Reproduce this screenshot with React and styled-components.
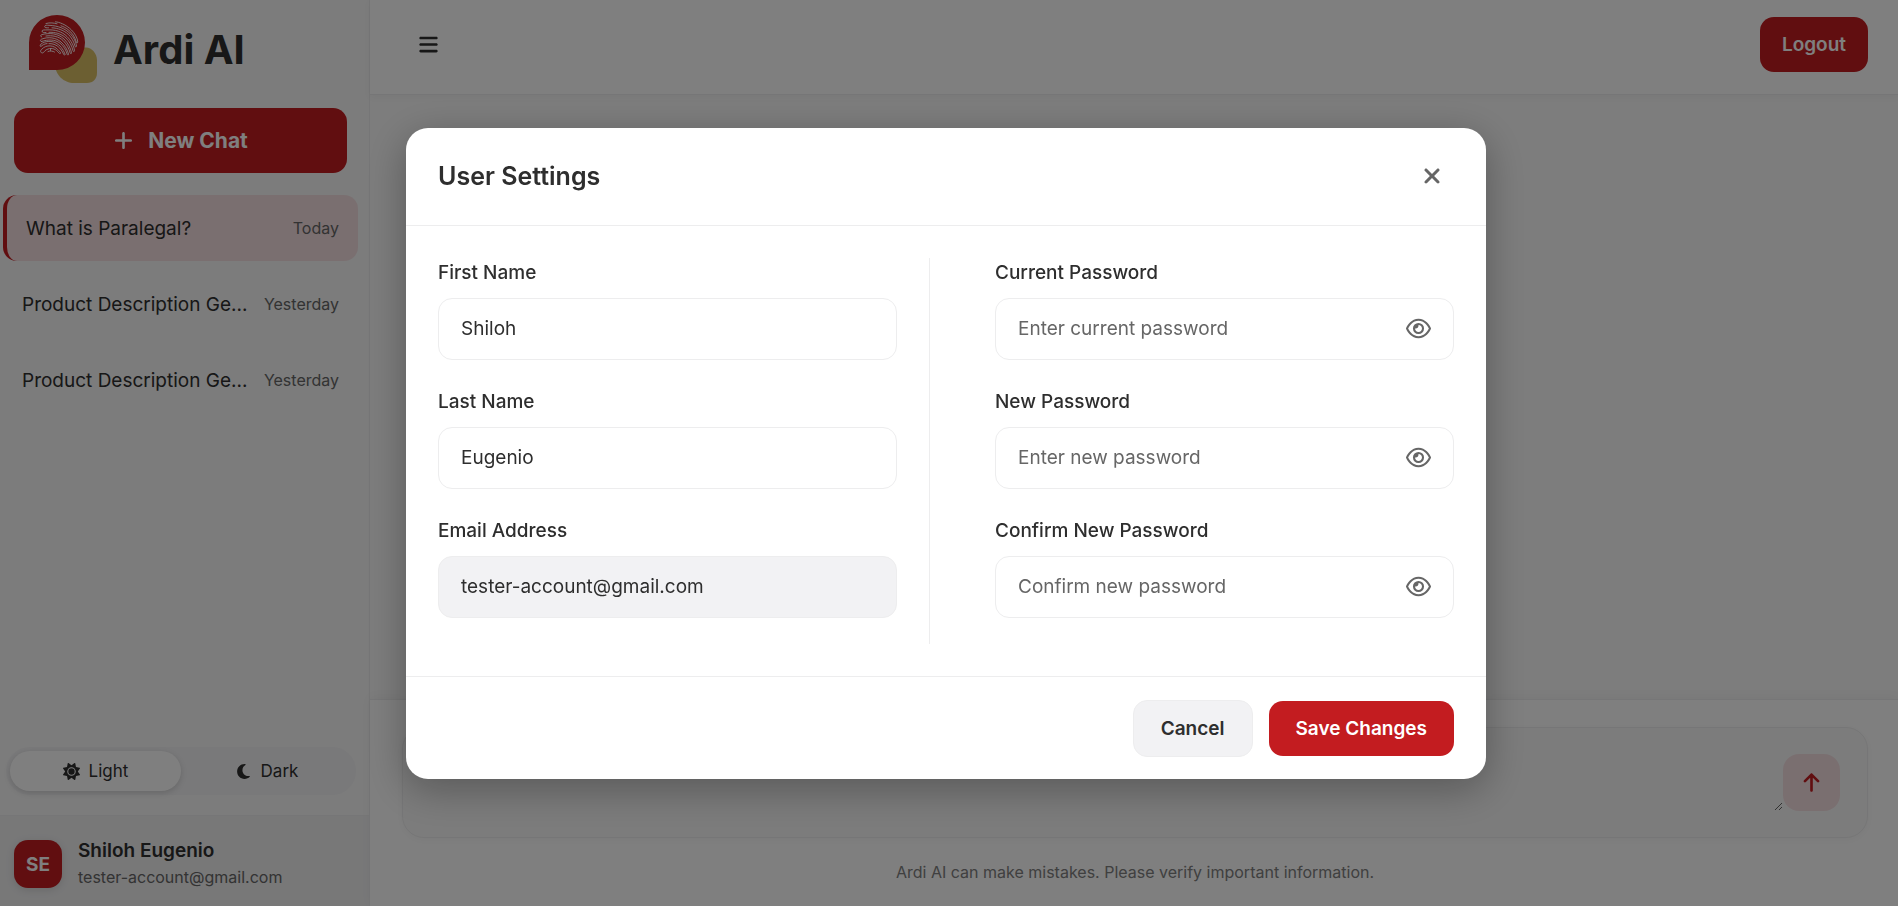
import React, { useState } from "react";
import styled, { createGlobalStyle } from "styled-components";
import { FaArrowUp, FaBars, FaMoon, FaPlus, FaRegEye, FaSun, FaXmark } from "react-icons/fa6";

const c = {
  red: "#c31c20",
  gold: "#d9bf65",
  ink: "#2e2e2e",
  muted: "#666666",
  line: "#ededee",
  soft: "#f2f2f4",
  tint: "#f4dfe1",
};

const GlobalStyle = createGlobalStyle`
  *, *::before, *::after { box-sizing: border-box; }
  body { margin: 0; color: ${c.ink}; background: #fafafa; font-family: Inter, "Liberation Sans", sans-serif; }
  button, input, textarea { font: inherit; color: inherit; }
  button { cursor: pointer; border: 0; padding: 0; background: none; }
`;

const Page = styled.div`
  display: flex;
  min-height: 100vh;
`;

const Sidebar = styled.aside`
  display: flex;
  flex-direction: column;
  flex: none;
  width: 370px;
  background: #f8f8f8;
  border-right: 1px solid ${c.line};
`;

const Brand = styled.div`
  display: flex;
  align-items: center;
  gap: 15px;
  height: 98px;
  padding-left: 28px;
  font-size: 40px;
  font-weight: 700;
`;

const NewChat = styled.button`
  display: flex;
  align-items: center;
  justify-content: center;
  gap: 14px;
  height: 65px;
  margin: 10px 22px 22px 14px;
  border-radius: 14px;
  background: ${c.red};
  color: #fff;
  font-size: 21px;
  font-weight: 700;

  svg { width: auto; }
`;

const ChatList = styled.nav`
  display: flex;
  flex-direction: column;
  flex: 1;
  gap: 10px;
  padding: 0 11px 0 3px;
`;

const ChatLink = styled.a`
  display: flex;
  align-items: center;
  justify-content: space-between;
  height: 66px;
  padding: 0 19px;
  border-radius: 14px;
  border-left: ${(p) => (p.$active ? `4px solid ${c.red}` : "0")};
  background: ${(p) => (p.$active ? c.tint : "transparent")};
  color: inherit;
  text-decoration: none;
  white-space: nowrap;
`;

const ChatTitle = styled.span`
  font-size: 19px;
`;

const ChatDate = styled.span`
  color: ${c.muted};
  font-size: 16px;
`;

const ThemeSwitch = styled.div`
  display: flex;
  margin: 0 13px 20px 6px;
  padding: 4px;
  border-radius: 24px;
  background: ${c.soft};
`;

const ThemeButton = styled.button`
  display: flex;
  align-items: center;
  justify-content: center;
  flex: 1;
  gap: 9px;
  height: 40px;
  border-radius: 20px;
  font-size: 17px;
  background: ${(p) => (p.$active ? "#fff" : "transparent")};
  box-shadow: ${(p) => (p.$active ? "0 2px 6px rgba(0, 0, 0, 0.15)" : "none")};

  svg { width: auto; }
`;

const Account = styled.div`
  display: flex;
  align-items: center;
  gap: 16px;
  height: 91px;
  padding: 6px 14px 0;
  border-top: 1px solid ${c.line};
  background: #f0f0f1;
`;

const Avatar = styled.div`
  display: grid;
  place-items: center;
  width: 48px;
  height: 48px;
  border-radius: 14px;
  background: ${c.red};
  color: #fff;
  font-size: 19px;
  font-weight: 700;
  box-shadow: 0 2px 8px rgba(0, 0, 0, 0.12);
`;

const AccountText = styled.div`
  display: flex;
  flex-direction: column;
  gap: 2px;
  font-size: 16px;
  line-height: 25px;
  color: ${c.muted};

  strong { color: ${c.ink}; font-size: 19px; font-weight: 600; }
`;

const Main = styled.main`
  display: flex;
  flex-direction: column;
  flex: 1;
  min-width: 0;
`;

const TopBar = styled.header`
  display: flex;
  justify-content: space-between;
  align-items: center;
  height: 95px;
  padding: 0 30px 6px 48px;
  background: #fff;
  border-bottom: 1px solid ${c.line};
  box-shadow: 0 2px 8px rgba(0, 0, 0, 0.04);
`;

const MenuButton = styled.button`
  display: flex;
  font-size: 21px;
`;

const Button = styled.button`
  height: ${(p) => (p.$quiet ? 57 : 55)}px;
  padding: 0 ${(p) => p.$pad}px;
  border-radius: 14px;
  border: ${(p) => (p.$quiet ? `1px solid ${c.line}` : "0")};
  background: ${(p) => (p.$quiet ? c.soft : c.red)};
  color: ${(p) => (p.$quiet ? c.ink : "#fff")};
  font-size: 19px;
  font-weight: 600;
`;

const Conversation = styled.section`
  flex: 1;
`;

const ComposerPanel = styled.footer`
  padding: 27px 30px 21px 32px;
  border-top: 1px solid ${c.line};
  background: #fff;
  box-shadow: 0 -2px 10px rgba(0, 0, 0, 0.04);
`;

const Composer = styled.form`
  display: flex;
  align-items: center;
  height: 111px;
  padding: 0 27px 0 22px;
  border: 1px solid ${c.line};
  border-radius: 22px;
  background: #f9f9f9;
  box-shadow: 0 2px 10px rgba(0, 0, 0, 0.04);
`;

const Message = styled.textarea`
  flex: 1;
  height: 57px;
  border: 0;
  outline: 0;
  background: transparent;
  font-size: 19px;
  resize: vertical;
`;

const Send = styled.button`
  display: grid;
  place-items: center;
  width: 57px;
  height: 57px;
  border-radius: 16px;
  background: ${c.tint};
  color: ${c.red};
  font-size: 21px;
`;

const Disclaimer = styled.p`
  margin: 22px 0 0;
  text-align: center;
  color: #808080;
  font-size: 16px;
  line-height: 25px;
`;

const Overlay = styled.div`
  position: fixed;
  inset: 0;
  display: flex;
  align-items: center;
  justify-content: center;
  padding-right: 6px;
  background: rgba(0, 0, 0, 0.5);
`;

const Dialog = styled.form`
  width: 1080px;
  max-width: 94%;
  border-radius: 22px;
  background: #fff;
  box-shadow: 0 10px 40px rgba(0, 0, 0, 0.3);
`;

const DialogHeader = styled.header`
  display: flex;
  align-items: center;
  justify-content: space-between;
  height: 98px;
  padding: 0 42px 0 32px;
  border-bottom: 1px solid ${c.line};

  h2 { margin: 0; font-size: 25px; font-weight: 600; }
`;

const CloseButton = styled.button`
  display: flex;
  color: ${c.muted};
  font-size: 24px;
`;

const DialogBody = styled.div`
  display: grid;
  grid-template-columns: 1fr 1fr;
  gap: 32px;
  padding: 32px;
`;

const Column = styled.div`
  display: flex;
  flex-direction: column;
  gap: 27px;
  padding-bottom: 26px;

  &:first-child { padding-right: 32px; border-right: 1px solid ${c.line}; }
  &:last-child { padding-left: 33px; }
`;

const FieldBox = styled.div`
  display: flex;
  flex-direction: column;
  gap: 10px;
  font-size: 19px;

  label { line-height: 30px; font-weight: 500; }
`;

const InputFrame = styled.div`
  display: flex;
  align-items: center;
  height: 62px;
  padding: 0 22px;
  border: 1px solid ${c.line};
  border-radius: 14px;
  background: ${(p) => (p.$disabled ? c.soft : "#fff")};

  input { flex: 1; min-width: 0; padding: 0; border: 0; outline: 0; background: transparent; }
  input::placeholder { color: ${c.muted}; opacity: 1; }
  button { display: flex; color: ${c.muted}; font-size: 25px; }
`;

const DialogFooter = styled.footer`
  display: flex;
  align-items: center;
  justify-content: flex-end;
  gap: 16px;
  padding: 23px 32px 22px;
  border-top: 1px solid ${c.line};
`;

/* Fingerprint ridges: hairpin loops fanning from the lower left to the lower right. */
const ridges = [
  "M14.500 39C12 39 12 36.500 14 35C18 31 24 31 28 34C30 35.500 32 38 32.500 38.500C33 39.500 32 40 31.300 39.300C28 35 24 33.500 20 35C17 36 16.500 37.500 15.500 38.500",
  "M20 37.500C22 36.500 25 37 26.500 38M22.500 34.500V36.500",
  "M19 29.500C16 29.800 14 31.500 13 32.500C11.800 32.500 12 31 13 30C17 27 23 26.500 28 29C32 31 35 35 37 40C37.500 41.300 36.300 41.500 35.800 40.500C33.500 35.500 30.500 31.800 26 30.300C24 29.700 22 29.500 21 29.600",
  "M13.500 27.500C12 27.500 12 25.800 13.500 25.200C20 22.500 28 23.500 33 28C37 31.500 39.500 36 40.500 40C40.800 41.300 39.500 41.300 39.200 40.300C38 36 35.500 32 32 29.200C27 25.200 20 25.300 13.500 27.500",
  "M13.500 22.800C12 22.500 12.500 21 13.800 20.600C22 18.500 30 19.500 36 25C40 29 42.500 34 43.500 38.500C43.700 40 42.500 40 42.200 39C41 34.500 38.500 30 35 26.500C31 22.500 24 21 18 22",
  "M18 18.500C16.500 18.800 14 18.800 14 17C14.200 15.600 17 16 19 15.900C27 15.400 34 17.500 39 22.500C43 26.500 46 32 46.500 36.500C46.500 38 45.300 37.800 45 36.800C44 32 41.500 27.500 38 24C33 19.500 27 18 21 18.300",
  "M20.500 13.800C18.500 13.800 16.500 14 16.700 12.400C17 11 19 11.200 21 11.300C30 11.700 37 14.500 42 19.500C46 23.500 48 28 48.500 32C48.300 33.500 47.200 33 47 32C46 28 43.500 23.500 40.500 20.500C36 16.500 30 14 24 13.800",
  "M18 9.500C22 8.300 26 9 29 9.800M27.500 7.800C31 8 38 10.500 43.500 16C47 19.500 49.500 24 49.800 28C49.500 29.500 48.500 29 48.300 28C47 23 44 18.500 40 15.500C37.500 13.500 35 12.500 33 11.800",
];

function Logo() {
  return (
    <svg width="70" height="70" viewBox="0 0 70 70" aria-hidden="true">
      <path d="M27 40H50C56 27 69 36 69 46V59C69 65 65 69 59 69H46C36 69 27 61 27 50Z" fill={c.gold} />
      <path d="M1 56V28.500A28 27.500 0 1 1 29 56Z" fill={c.red} />
      <g fill="none" stroke="#fff" strokeWidth="0.9" strokeLinecap="round" strokeLinejoin="round">
        {ridges.map((d) => <path key={d} d={d} />)}
      </g>
    </svg>
  );
}

function Field({ id, label, ...rest }) {
  const isPassword = rest.type === "password";
  const [shown, setShown] = useState(false);
  return (
    <FieldBox>
      <label htmlFor={id}>{label}</label>
      <InputFrame $disabled={rest.readOnly}>
        <input id={id} {...rest} type={isPassword && shown ? "text" : rest.type} />
        {isPassword && (
          <button type="button" aria-label={`Show ${label}`} onClick={() => setShown(!shown)}>
            <FaRegEye />
          </button>
        )}
      </InputFrame>
    </FieldBox>
  );
}

const chats = [
  { title: "What is Paralegal?", date: "Today", active: true },
  { title: "Product Description Ge...", date: "Yesterday" },
  { title: "Product Description Ge...", date: "Yesterday" },
];

export default function App() {
  const [theme, setTheme] = useState("light");
  return (
    <>
      <GlobalStyle />
      <Page>
        <Sidebar>
          <Brand><Logo />Ardi AI</Brand>
          <NewChat><FaPlus />New Chat</NewChat>
          <ChatList>
            {chats.map((chat, i) => (
              <ChatLink key={i} href="#" $active={chat.active}>
                <ChatTitle>{chat.title}</ChatTitle>
                <ChatDate>{chat.date}</ChatDate>
              </ChatLink>
            ))}
          </ChatList>
          <ThemeSwitch>
            <ThemeButton $active={theme === "light"} onClick={() => setTheme("light")}><FaSun size={17} />Light</ThemeButton>
            <ThemeButton $active={theme === "dark"} onClick={() => setTheme("dark")}><FaMoon size={17} />Dark</ThemeButton>
          </ThemeSwitch>
          <Account>
            <Avatar>SE</Avatar>
            <AccountText><strong>Shiloh Eugenio</strong>tester-account@gmail.com</AccountText>
          </Account>
        </Sidebar>
        <Main>
          <TopBar>
            <MenuButton aria-label="Toggle sidebar"><FaBars /></MenuButton>
            <Button $pad={22}>Logout</Button>
          </TopBar>
          <Conversation />
          <ComposerPanel>
            <Composer onSubmit={(e) => e.preventDefault()}>
              <Message aria-label="Message" />
              <Send aria-label="Send message"><FaArrowUp /></Send>
            </Composer>
            <Disclaimer>Ardi AI can make mistakes. Please verify important information.</Disclaimer>
          </ComposerPanel>
        </Main>
      </Page>
      <Overlay>
        <Dialog role="dialog" aria-labelledby="settings-title" onSubmit={(e) => e.preventDefault()}>
          <DialogHeader>
            <h2 id="settings-title">User Settings</h2>
            <CloseButton type="button" aria-label="Close"><FaXmark /></CloseButton>
          </DialogHeader>
          <DialogBody>
            <Column>
              <Field id="first" label="First Name" type="text" defaultValue="Shiloh" />
              <Field id="last" label="Last Name" type="text" defaultValue="Eugenio" />
              <Field id="email" label="Email Address" type="email" defaultValue="tester-account@gmail.com" readOnly />
            </Column>
            <Column>
              <Field id="current" label="Current Password" type="password" placeholder="Enter current password" />
              <Field id="new" label="New Password" type="password" placeholder="Enter new password" />
              <Field id="confirm" label="Confirm New Password" type="password" placeholder="Confirm new password" />
            </Column>
          </DialogBody>
          <DialogFooter>
            <Button type="button" $quiet $pad={27}>Cancel</Button>
            <Button type="submit" $pad={27}>Save Changes</Button>
          </DialogFooter>
        </Dialog>
      </Overlay>
    </>
  );
}
